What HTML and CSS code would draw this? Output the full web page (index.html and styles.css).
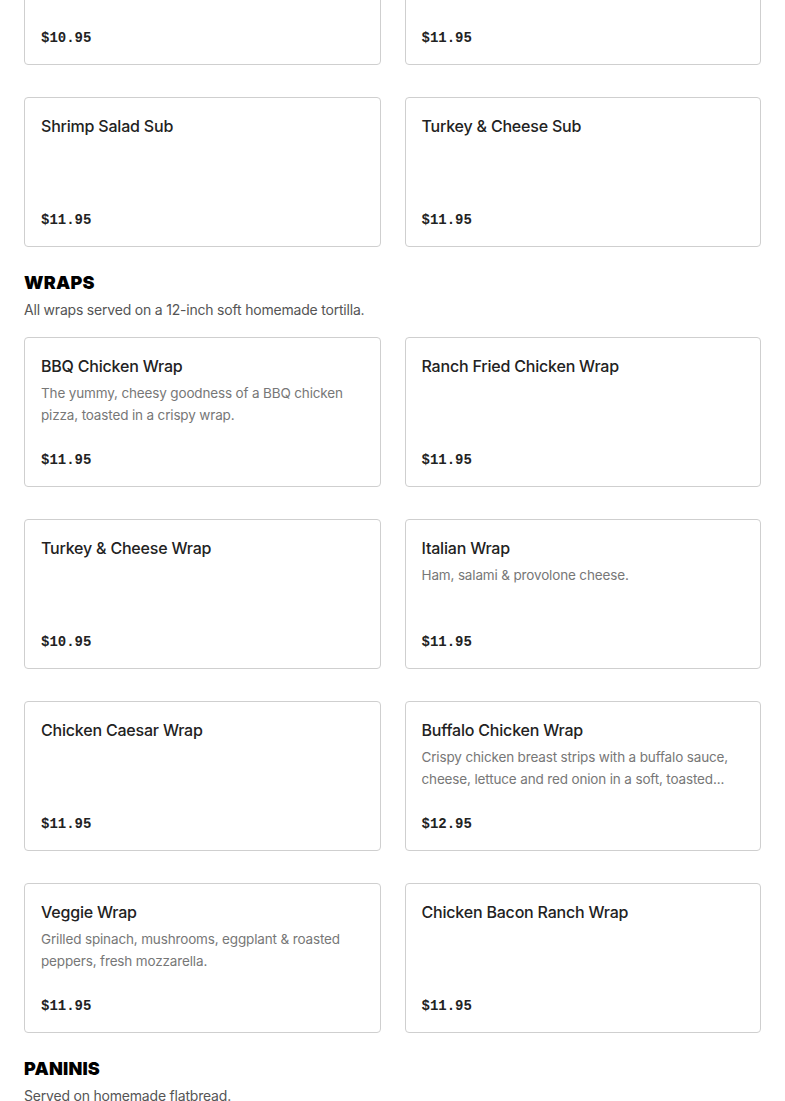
FILE: index.html
```html
<!DOCTYPE html>
<html lang="en">
<head>
<meta charset="utf-8">
<title>Menu</title>
<link rel="stylesheet" href="styles.css">
</head>
<body>
<main class="menu">
  <section class="section section-top">
    <div class="grid">
      <div class="card"><div class="price">$10.95</div></div>
      <div class="card"><div class="price">$11.95</div></div>
      <div class="card"><h3 class="title">Shrimp Salad Sub</h3><div class="price">$11.95</div></div>
      <div class="card"><h3 class="title">Turkey &amp; Cheese Sub</h3><div class="price">$11.95</div></div>
    </div>
  </section>

  <section class="section">
    <h2 class="heading">WRAPS</h2>
    <p class="section-desc">All wraps served on a 12-inch soft homemade tortilla.</p>
    <div class="grid">
      <div class="card"><h3 class="title">BBQ Chicken Wrap</h3><p class="desc">The yummy, cheesy goodness of a BBQ chicken pizza, toasted in a crispy wrap.</p><div class="price">$11.95</div></div>
      <div class="card"><h3 class="title">Ranch Fried Chicken Wrap</h3><div class="price">$11.95</div></div>
      <div class="card"><h3 class="title">Turkey &amp; Cheese Wrap</h3><div class="price">$10.95</div></div>
      <div class="card"><h3 class="title">Italian Wrap</h3><p class="desc">Ham, salami &amp; provolone cheese.</p><div class="price">$11.95</div></div>
      <div class="card"><h3 class="title">Chicken Caesar Wrap</h3><div class="price">$11.95</div></div>
      <div class="card"><h3 class="title">Buffalo Chicken Wrap</h3><p class="desc">Crispy chicken breast strips with a buffalo sauce, cheese, lettuce and red onion in a soft, toasted...</p><div class="price">$12.95</div></div>
      <div class="card"><h3 class="title">Veggie Wrap</h3><p class="desc">Grilled spinach, mushrooms, eggplant &amp; roasted peppers, fresh mozzarella.</p><div class="price">$11.95</div></div>
      <div class="card"><h3 class="title">Chicken Bacon Ranch Wrap</h3><div class="price">$11.95</div></div>
    </div>
  </section>

  <section class="section">
    <h2 class="heading">PANINIS</h2>
    <p class="section-desc">Served on homemade flatbread.</p>
  </section>
</main>
</body>
</html>
```

FILE: styles.css
```css
* { box-sizing: border-box; }
html, body { margin: 0; padding: 0; background: #fff; }
body {
  font-family: Inter, "Noto Sans", "Liberation Sans", sans-serif;
  color: #222;
  overflow: hidden;
}
.menu { padding: 0 24px; }
.section { margin-top: 24px; }
.section-top { margin-top: -85px; }
.heading {
  margin: 0;
  font-size: 18px;
  line-height: 24px;
  font-weight: 900;
  color: #000;
  letter-spacing: 0.2px;
}
.section-desc {
  margin: 4px 0 0;
  font-size: 14px;
  line-height: 22px;
  letter-spacing: -0.2px;
  color: #555;
}
.section-desc + .grid { margin-top: 16px; }
.grid {
  display: grid;
  grid-template-columns: 1fr 1fr;
  column-gap: 24px;
  row-gap: 32px;
}
.card {
  display: flex;
  flex-direction: column;
  min-height: 150px;
  padding: 16px;
  border: 1px solid #cfcfcf;
  border-radius: 4px;
  background: #fff;
}
.title {
  margin: 0;
  font-size: 16px;
  line-height: 24px;
  font-weight: 500;
  letter-spacing: -0.2px;
  color: #222;
}
.desc {
  margin: 4px 0 0;
  font-size: 13.5px;
  line-height: 22px;
  letter-spacing: -0.15px;
  color: #777;
}
.price {
  margin-top: auto;
  font-family: "Liberation Mono", "DejaVu Sans Mono", monospace;
  font-weight: 700;
  font-size: 14px;
  line-height: 20px;
  color: #222;
}
```
